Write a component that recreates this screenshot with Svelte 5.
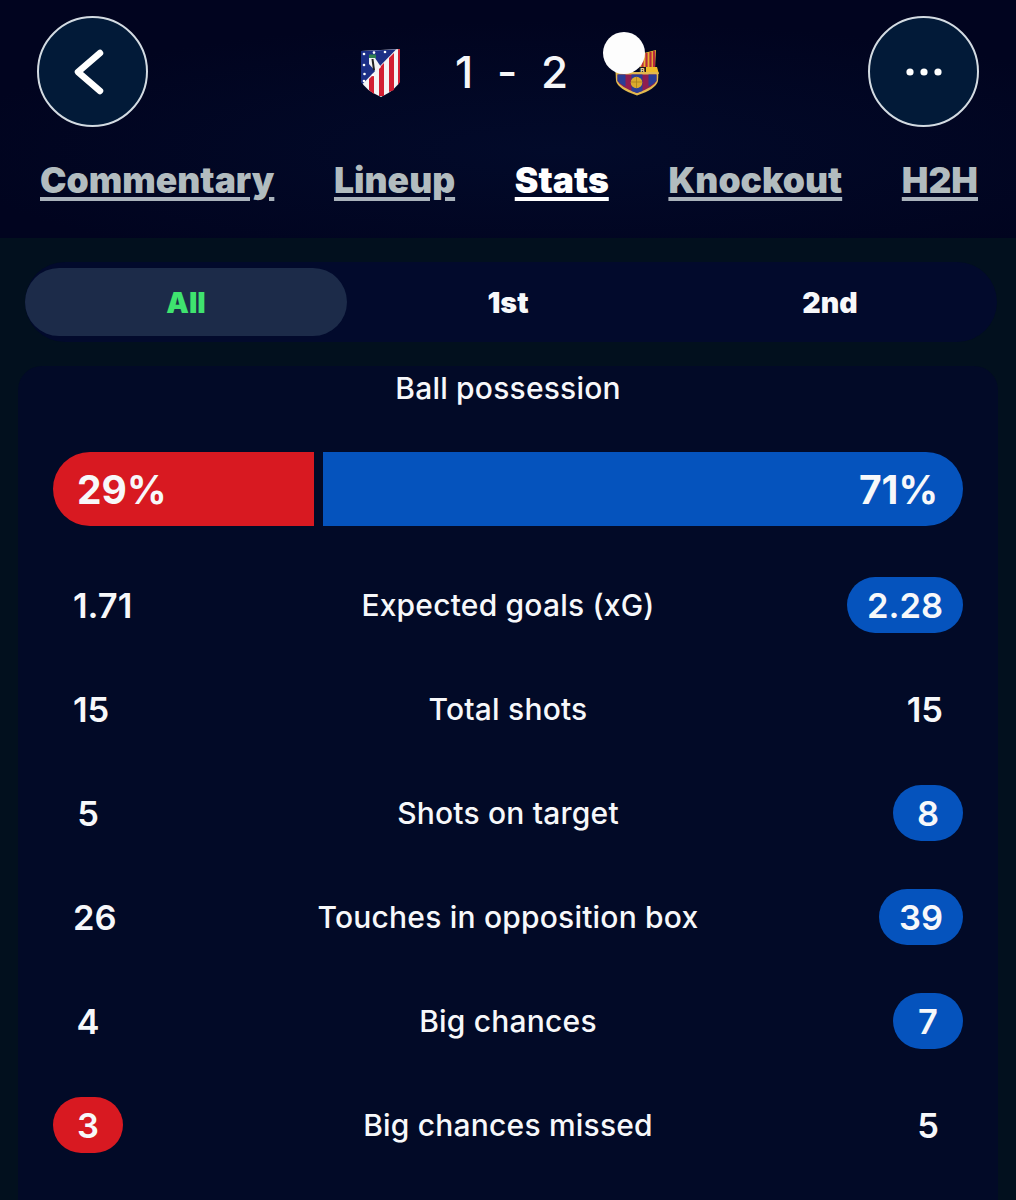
<script>
  const tabs = [
    { label: 'Commentary' },
    { label: 'Lineup' },
    { label: 'Stats', active: true },
    { label: 'Knockout' },
    { label: 'H2H' }
  ];
  const periods = [{ label: 'All', active: true }, { label: '1st' }, { label: '2nd' }];
  const stats = [
    { label: 'Expected goals (xG)', home: '1.71', away: '2.28', win: 'away' },
    { label: 'Total shots', home: '15', away: '15' },
    { label: 'Shots on target', home: '5', away: '8', win: 'away' },
    { label: 'Touches in opposition box', home: '26', away: '39', win: 'away' },
    { label: 'Big chances', home: '4', away: '7', win: 'away' },
    { label: 'Big chances missed', home: '3', away: '5', win: 'home' }
  ];
</script>

<div class="page">
  <header class="header">
    <div class="top">
      <button class="round" aria-label="Back">
        <svg width="34" height="48" viewBox="0 0 34 48"><path d="M28 5 L6 24 L28 43" fill="none" stroke="#fff" stroke-width="6.5" stroke-linecap="round" stroke-linejoin="round"/></svg>
      </button>
      <div class="score">
        <svg class="crest-a" width="41" height="50" viewBox="0 0 41 50">
          <path d="M1 3 L40 1 V33 Q36 42 21 49 Q5 42 1 33 Z" fill="#f4f4f4"/>
          <g fill="#d21f32">
            <path d="M9 31 L14 26 V46 L9 42 Z"/>
            <path d="M19 20 L24 15 V48 L19 48 Z"/>
            <path d="M29 10 L34 5 V42 L29 44 Z"/>
            <path d="M38 1.2 L40 1 V34 L38 37 Z"/>
          </g>
          <path d="M1 3 L36 1.4 L2.5 36 Q1 35 1 33 Z" fill="#1c2f86"/>
          <path d="M9 6.5 h7 v4 h-7z" fill="#2f8050"/>
          <path d="M9 10 h6 l6 9 l-5 5 l-7 -8z" fill="#f2f2f2"/>
          <path d="M11.5 11 h2 l1.5 11 l-2 0.6z" fill="#222"/>
          <g fill="#fff"><circle cx="4" cy="6" r="1.3"/><circle cx="14" cy="4.6" r="1.3"/><circle cx="25" cy="4" r="1.3"/><circle cx="4" cy="17" r="1.3"/><circle cx="4.5" cy="26" r="1.3"/><circle cx="4" cy="33" r="1.3"/><circle cx="13" cy="27" r="1.3"/></g>
        </svg>
        <span class="nums"><span>1</span><span>-</span><span>2</span></span>
        <div class="barca">
          <svg width="44" height="46" viewBox="0 0 44 46">
            <path d="M25 4 L41 0 L40 18 H25 Z" fill="#e8b330"/>
            <path d="M27.5 4 v14 M31.5 3 v15 M35.5 2 v16 M39 1 v17" stroke="#b8283c" stroke-width="2.2"/>
            <path d="M30 17 H42 L44 24 H26 Z" fill="#f0bb2a"/>
            <rect x="24" y="17" width="7" height="6" fill="#1a1a1a"/>
            <text x="25.2" y="22.6" font-size="6.5" font-weight="800" fill="#e8d6a0" font-family="Inter, sans-serif">B</text>
            <path d="M0.5 22 H43.5 L43 31 Q41 39 22 45.5 Q3 39 1 31 Z" fill="#e2b94e"/>
            <path d="M2.5 24.5 H41.5 V31 Q39 37 22 43 Q5 37 2.5 31 Z" fill="#8f1d50"/>
            <path d="M2.5 24.5 h8 V36.5 Q5 34 2.5 31 Z M16.5 24.5 h11 V41 L22 43 L16.5 41 Z M33.5 24.5 h8 V31 Q39 34 33.5 36.5 Z" fill="#2a3d96"/>
            <circle cx="21.5" cy="32.5" r="5.8" fill="#dcaa2c"/>
            <path d="M16 32 h11 M21.5 27 v11" stroke="#a77f1e" stroke-width="0.8"/>
          </svg>
          <span class="blob"></span>
        </div>
      </div>
      <button class="round" aria-label="More">
        <svg width="42" height="10" viewBox="0 0 42 10"><g fill="#fff"><circle cx="7" cy="5" r="3.6"/><circle cx="21" cy="5" r="3.6"/><circle cx="35" cy="5" r="3.6"/></g></svg>
      </button>
    </div>
    <nav class="tabs">
      {#each tabs as t}
        <span class="tab" class:active={t.active}>{t.label}</span>
      {/each}
    </nav>
  </header>

  <main class="body">
    <div class="track">
      {#each periods as p}
        <span class="period" class:on={p.active}>{p.label}</span>
      {/each}
    </div>

    <section class="card">
      <h2 class="title">Ball possession</h2>
      <div class="bar">
        <div class="seg red">29%</div>
        <div class="seg blue">71%</div>
      </div>
      <div class="rows">
        {#each stats as s}
          <div class="row">
            <span class="val" class:pill-red={s.win === 'home'}>{s.home}</span>
            <span class="label">{s.label}</span>
            <span class="val" class:pill-blue={s.win === 'away'}>{s.away}</span>
          </div>
        {/each}
      </div>
    </section>
  </main>
</div>

<style>
  :global(body) {
    margin: 0;
    background: #02101e;
  }
  .page {
    width: 1016px;
    height: 1200px;
    overflow: hidden;
    font-family: Inter, "Liberation Sans", sans-serif;
    color: #f7f8fa;
    background: #02101e;
  }
  .header {
    height: 238px;
    box-sizing: border-box;
    padding: 16px 37px 0 37px;
    background: radial-gradient(ellipse 620px 130px at 560px 150px, #020a2a 0%, #01041f 100%);
  }
  .top {
    display: grid;
    grid-template-columns: 111px 1fr 111px;
    align-items: center;
  }
  .round {
    width: 111px;
    height: 111px;
    border-radius: 50%;
    border: 2px solid #d3dbe2;
    background: #021a38;
    padding: 0;
    display: flex;
    align-items: center;
    justify-content: center;
  }
  .round:first-child svg {
    margin-right: 7px;
  }
  .score {
    display: flex;
    align-items: center;
    margin-left: 212px;
  }
  .crest-a {
    margin-top: 3px;
    flex: none;
  }
  .nums {
    display: flex;
    align-items: center;
    width: 113px;
    justify-content: space-between;
    margin: 0 47px 0 54px;
    font-size: 44px;
    font-weight: 500;
    line-height: 1;
    color: #f5f6f8;
  }
  .barca {
    position: relative;
    width: 44px;
    height: 46px;
    margin-top: 2px;
  }
  .blob {
    position: absolute;
    left: -12px;
    top: -18px;
    width: 42px;
    height: 42px;
    border-radius: 50%;
    background: #fdfdfd;
  }
  .tabs {
    display: flex;
    justify-content: space-between;
    margin-top: 31px;
    padding: 0 1px 0 3px;
  }
  .tab {
    font-size: 35.5px;
    font-weight: 900;
    line-height: 46px;
    color: #b2bcbf;
    text-decoration: underline;
    text-decoration-thickness: 4px;
    text-underline-offset: 4px;
    text-decoration-color: #a9b2bb;
  }
  .tab.active {
    color: #fff;
    text-decoration-color: #fff;
  }
  .body {
    padding: 24px 18px 0;
  }
  .track {
    display: grid;
    grid-template-columns: repeat(3, 322px);
    height: 80px;
    margin: 0 1px 0 7px;
    padding: 6px 0;
    box-sizing: border-box;
    border-radius: 40px;
    background: #020a2c;
  }
  .period {
    display: flex;
    align-items: center;
    justify-content: center;
    height: 68px;
    border-radius: 34px;
    font-size: 28.5px;
    font-weight: 900;
    color: #f7f8fa;
  }
  .period.on {
    background: #1c2b49;
    color: #3fe36f;
  }
  .card {
    margin-top: 24px;
    height: 900px;
    padding: 0 35px;
    border-radius: 24px 24px 0 0;
    background: #020a27;
  }
  .title {
    margin: 0;
    padding-top: 4px;
    font-size: 30px;
    font-weight: 500;
    line-height: 36px;
    text-align: center;
    letter-spacing: 0.2px;
  }
  .bar {
    display: flex;
    gap: 9px;
    margin-top: 46px;
    height: 74px;
    font-size: 39px;
    font-weight: 700;
  }
  .seg {
    display: flex;
    align-items: center;
  }
  .red {
    width: 261px;
    padding-left: 24px;
    box-sizing: border-box;
    background: #d81921;
    border-radius: 37px 0 0 37px;
  }
  .blue {
    flex: 1;
    justify-content: flex-end;
    padding-right: 25px;
    background: #0553bd;
    border-radius: 0 37px 37px 0;
  }
  .rows {
    margin-top: 27px;
  }
  .row {
    display: flex;
    align-items: center;
    justify-content: space-between;
    position: relative;
    height: 104px;
  }
  .val {
    min-width: 30px;
    height: 56px;
    padding: 0 20px;
    border-radius: 28px;
    display: flex;
    align-items: center;
    justify-content: center;
    font-size: 34.5px;
    font-weight: 600;
  }
  .pill-blue {
    background: #0553bd;
  }
  .pill-red {
    background: #d81921;
  }
  .label {
    position: absolute;
    left: 0;
    right: 0;
    text-align: center;
    font-size: 30px;
    font-weight: 500;
    letter-spacing: 0.2px;
  }
</style>
